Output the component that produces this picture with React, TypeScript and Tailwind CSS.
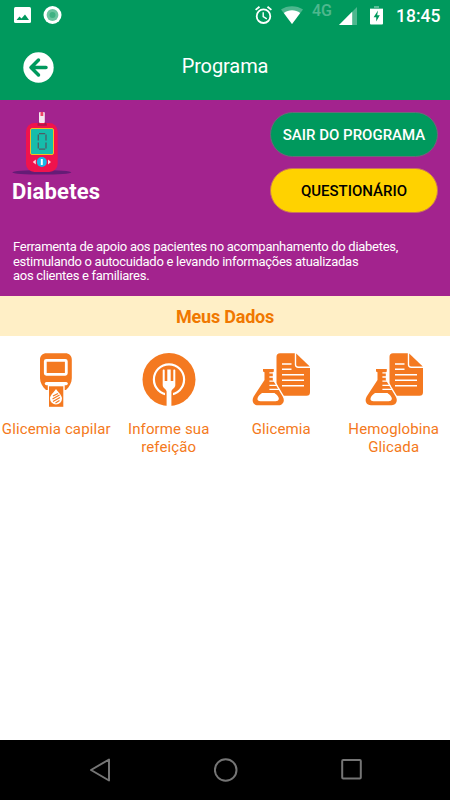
import React, { ReactNode } from 'react';

interface ShortcutProps {
  label: ReactNode;
  children: ReactNode;
}

const StatusBar = () => (
  <div className="h-8 flex items-start text-white">
    <svg className="ml-3.5 mt-[7px] w-[17px] h-4" viewBox="0 0 17 16">
      <rect width="17" height="16" rx="1.5" fill="#fff" />
      <path d="M2.5 13 5.500 9.500 7.500 11.500 11 7.500 15 13z" fill="#00995d" />
    </svg>
    <svg className="ml-3 mt-1.5 w-[19px] h-[18px]" viewBox="0 0 19 18">
      <circle cx="9.5" cy="9" r="9" fill="#fff" />
      <circle cx="9.5" cy="9" r="5.9" fill="#6cc4a0" />
      <circle cx="9.5" cy="9" r="3" fill="#40b183" />
    </svg>
    <svg
      className="ml-[193px] mt-1.5 w-[17px] h-[18px]"
      viewBox="0 0 17 18"
      fill="none"
      stroke="#fff"
      strokeWidth="1.8"
    >
      <circle cx="8.5" cy="10.2" r="6.8" />
      <path d="M.6 3.9 4.5.7M16.4 3.9 12.5.7" />
      <path d="M8.2 6.3v4.3l3.6 2.2" strokeWidth="1.4" />
    </svg>
    <svg className="ml-[9px] mt-1.5 w-[22px] h-[18px]" viewBox="0 0 22 18" fill="#fff">
      <path d="M11 18 0 3.6C6-1 16-1 22 3.6z" opacity=".3" />
      <path d="M11 18 2.800 7.100C7.500 3.300 14.500 3.300 19.200 7.100z" />
    </svg>
    <span className="ml-[9px] mt-[3px] w-[21px] text-[16px] leading-4 font-medium opacity-30">
      4G
    </span>
    <svg className="ml-1.5 mt-[7px] w-[18px] h-[18px]" viewBox="0 0 18 18" fill="#fff">
      <path d="M0 18 18 0v18z" opacity=".3" />
      <path d="M0 18 13.2 4.8V18z" />
    </svg>
    <svg className="ml-[13px] mt-1.5 w-[13px] h-[19px]" viewBox="0 0 13 19" fill="#fff">
      <path d="M4 0h5v2h4v2H0V2h4z" opacity=".35" />
      <path d="M0 3h13v14.5a1 1 0 0 1-1 1H1a1 1 0 0 1-1-1z" />
      <path d="M8 4.500 3.600 11.200h2.600V15.500L9.800 9.200H7.200z" fill="#00995d" />
    </svg>
    <span className="ml-[13px] mt-1.5 text-[17.5px] leading-5 font-medium">18:45</span>
  </div>
);

const GlucoseMeter = () => (
  <svg className="w-[60px] h-[66px]" viewBox="0 0 60 66">
    <ellipse cx="29.800" cy="62.3" rx="29.5" ry="2.3" fill="#651c76" />
    <rect x="27" y="2" width="5.800" height="16" rx="1" fill="#f5e8f0" />
    <path d="M28.500 2h2.800v4h-2.800z" fill="#ed4567" />
    <rect x="14" y="13" width="31.700" height="49" rx="8.500" fill="#f0134d" />
    <path d="M25.500 14.500c0-1.500 1-2 2-2v1.700h5v-1.700c1 0 2.300.5 2.300 2v1.200h-9.300z" fill="#a71b4a" />
    <rect x="18.500" y="18.500" width="23" height="26" rx="1.5" fill="#16bdab" stroke="#f4bf20" />
    <path
      d="M27 23.700h6.200M27 39.200h6.200M26.300 24.500v6M34 24.500v6M26.300 32.500v6M34 32.500v6"
      stroke="#4f5c66"
      strokeWidth="1.300"
    />
    <circle cx="29.800" cy="52" r="5" fill="#18b8e8" />
    <path d="M28.800 49h2v6h-2z" fill="#fff" />
    <path d="m23.800 49.4-3 2.6 3 2.6zM36 49.4l3 2.6-3 2.6z" fill="#ffd5df" />
  </svg>
);

const MeterIcon = () => (
  <svg className="w-[60px] h-[56px]" viewBox="0 0 60 56">
    <path
      d="M20.500 1.300h18.800c3.900 0 6.500 2.500 6.500 6.500v18.500c0 4.500-2.300 8.500-5.800 11.700H20c-3.500-3.200-6-7.200-6-11.700V7.800c0-4 2.600-6.500 6.500-6.500z"
      fill="#f47920"
    />
    <rect x="19.300" y="8.300" width="21" height="14" rx="1" fill="none" stroke="#fff" strokeWidth="2.800" />
    <rect x="18.800" y="30" width="23" height="3.200" rx="1.600" fill="#fff" />
    <path d="M21.800 33h16.900v6H21.800z" fill="#fff" />
    <path d="M23 34.300h14.300v20.500H23z" fill="#f47920" />
    <path d="M30 37c2.300 3.400 6 6.300 6 9.500a6 6 0 0 1-12 0c0-3.200 3.700-6.100 6-9.500z" fill="#fff" />
    <path d="m27 44 5-2.500M26.500 47l7-4M27 49.500l7-4M29.500 51l4-2.500" stroke="#f47920" strokeWidth="1.200" />
  </svg>
);

const ForkIcon = () => (
  <svg className="w-[60px] h-[56px]" viewBox="0 0 60 56">
    <circle cx="30" cy="27.500" r="26.500" fill="#f47920" />
    <circle cx="30" cy="27.500" r="15.100" fill="none" stroke="#fff" strokeWidth="2.200" />
    <path d="M26 38.500h8v7h-8z" fill="#f47920" />
    <path
      d="M24.700 17.500c.6 0 1 .4 1 1V29h2.600V17.500h3.400V29h2.600V18.500c0-.6.4-1 1-1s1 .4 1 1V33c0 3.300-3.900 4.200-3.900 6.500V55h-4.800V39.500c0-2.300-3.900-3.200-3.900-6.500V18.500c0-.6.4-1 1-1z"
      fill="#fff"
    />
  </svg>
);

const LabIcon = () => (
  <svg className="w-[60px] h-[56px]" viewBox="0 0 60 56">
    <path
      d="M29 1.300h14.800v11.200c0 2.300 1.200 3.500 3.500 3.500H59v24.300a3.500 3.500 0 0 1-3.500 3.500H29a3.500 3.500 0 0 1-3.500-3.500V4.800A3.500 3.500 0 0 1 29 1.300z"
      fill="#f47920"
    />
    <path d="M45.200 1.500 58.800 14.600H47.200c-1.300 0-2-.7-2-2z" fill="#f47920" />
    <path d="M31 12h9.500M31 17.300h9.500M31 22.700h22M31 28.200h22M31 33.700h22" stroke="#fff" strokeWidth="1.500" />
    <path
      d="M12 17h10.800v2.500l-1 .8V28l9.900 16.500c2.700 4.600.2 8.800-4.200 8.800H7c-4.500 0-6.900-4.200-4.300-8.800L13.500 28v-7.700l-1.500-.8z"
      fill="#f47920"
      stroke="#fff"
      strokeWidth="2.600"
      paintOrder="stroke"
      strokeLinejoin="round"
    />
    <path d="M11 41h12.500c2 1.600 4.800 4 4.300 6-.3 1.500-1.500 2.200-3.200 2.200H9.500c-2 0-3.300-1-3-2.800.3-1.900 2.300-3.700 4.500-5.400z" fill="#fff" />
    <path d="M18.400 20.800h4.500M18.400 25h4.500M18.400 29.200h5.500M18.400 33.300h8M18.400 37.400h10" stroke="#fff" strokeWidth="1.300" />
  </svg>
);

const Shortcut = ({ label, children }: ShortcutProps) => (
  <button className="flex flex-col items-center pt-4">
    {children}
    <span className="mt-[13px] text-[15px] leading-[17.5px] tracking-[0.12px] text-[#f47920] whitespace-nowrap">
      {label}
    </span>
  </button>
);

export default function App() {
  return (
    <div className="w-[450px] h-[800px] flex flex-col bg-white font-['Roboto',sans-serif] overflow-hidden">
      <header className="h-[100px] shrink-0 bg-[#00995d]">
        <StatusBar />
        <div className="grid grid-cols-[60px_1fr_60px] pt-5">
          <button className="ml-[23px]" aria-label="Voltar">
            <svg className="w-[31px] h-[31px]" viewBox="0 0 31 31">
              <circle cx="15.500" cy="15.500" r="15.200" fill="#fff" />
              <path
                d="M15.500 8 8 15.500 15.500 23M8.500 15.500h14.500"
                fill="none"
                stroke="#00995d"
                strokeWidth="3.500"
                strokeLinecap="round"
                strokeLinejoin="round"
              />
            </svg>
          </button>
          <h1 className="text-center text-[20px] leading-7 tracking-[-0.1px] text-white">Programa</h1>
        </div>
      </header>

      <section className="h-[196px] shrink-0 bg-[#a3238e] text-white">
        <div className="h-[140px] flex justify-between pl-3 pr-3 pt-2.5">
          <div>
            <GlucoseMeter />
            <h2 className="mt-0.5 text-[22px] leading-7 tracking-[0.2px] font-bold">Diabetes</h2>
          </div>
          <div className="w-[168px] mt-0.5 flex flex-col gap-[11px] text-[15px] font-medium">
            <button className="h-[45px] pt-0.5 rounded-full bg-[#00995d] border border-[#6b6a79] text-white">
              SAIR DO PROGRAMA
            </button>
            <button className="h-[45px] pt-0.5 rounded-full bg-[#ffd200] border border-[#c9735c] text-black">
              QUESTIONÁRIO
            </button>
          </div>
        </div>
        <p className="pl-[13px] text-[13px] leading-[14.500px] tracking-[-0.285px] whitespace-nowrap">
          Ferramenta de apoio aos pacientes no acompanhamento do diabetes,
          <br />
          estimulando o autocuidado e levando informações atualizadas
          <br />
          aos clientes e familiares.
        </p>
      </section>

      <h3 className="h-10 shrink-0 bg-[#ffefc6] text-center text-[18px] leading-[42px] tracking-[-0.2px] font-bold text-[#f07800]">
        Meus Dados
      </h3>

      <main className="flex-1 grid grid-cols-4 content-start">
        <Shortcut label="Glicemia capilar">
          <MeterIcon />
        </Shortcut>
        <Shortcut
          label={
            <>
              Informe sua
              <br />
              refeição
            </>
          }
        >
          <ForkIcon />
        </Shortcut>
        <Shortcut label="Glicemia">
          <LabIcon />
        </Shortcut>
        <Shortcut
          label={
            <>
              Hemoglobina
              <br />
              Glicada
            </>
          }
        >
          <LabIcon />
        </Shortcut>
      </main>

      <nav className="h-[60px] shrink-0 bg-black flex items-center justify-between pl-[89px] pr-[87px]">
        <svg className="w-6 h-6" viewBox="0 0 24 24" fill="none" stroke="#757575" strokeWidth="2">
          <path d="M20 1.500v21L2 12z" strokeLinejoin="round" />
        </svg>
        <svg className="w-6 h-6" viewBox="0 0 24 24" fill="none" stroke="#757575" strokeWidth="2">
          <circle cx="11.700" cy="12" r="10.800" />
        </svg>
        <svg className="w-6 h-6" viewBox="0 0 24 24" fill="none" stroke="#757575" strokeWidth="2">
          <rect x="3.200" y="1.900" width="18.600" height="18.600" rx="1" />
        </svg>
      </nav>
    </div>
  );
}
